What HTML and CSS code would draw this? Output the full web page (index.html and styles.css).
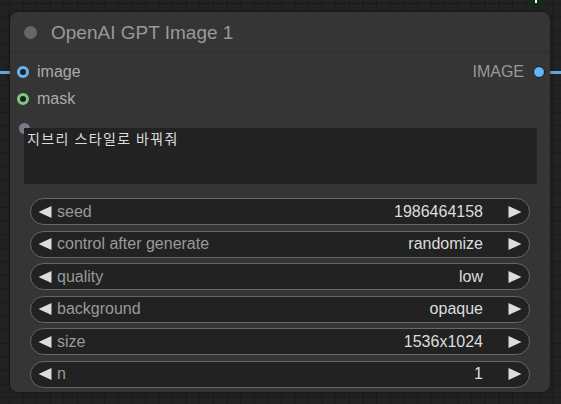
FILE: index.html
```html
<!DOCTYPE html>
<html>
<head>
<meta charset="utf-8">
<link rel="stylesheet" href="styles.css">
</head>
<body>
<div class="canvas">
  <div class="link link-in"></div>
  <div class="link link-out"></div>
  <div class="badge"><span class="badge-mark"></span></div>
  <div class="node">
    <div class="title">
      <span class="title-dot"></span>
      <span class="title-text">OpenAI GPT Image 1</span>
    </div>
    <div class="slots">
      <div class="slot-row">
        <div class="slot slot-in"><span class="dot ring blue"></span><span>image</span></div>
        <div class="slot slot-out"><span>IMAGE</span><span class="dot fill"></span></div>
      </div>
      <div class="slot-row">
        <div class="slot slot-in"><span class="dot ring green"></span><span>mask</span></div>
      </div>
    </div>
    <div class="prompt">
      <span class="prompt-dot"></span>
      <textarea class="prompt-input" spellcheck="false">지브리 스타일로 바꿔줘</textarea>
    </div>
    <div class="widgets">
      <div class="widget">
        <svg class="arrow" width="14" height="12" viewBox="0 0 14 12"><polygon points="0.5,6 13.5,0 13.5,12"/></svg>
        <span class="label">seed</span><span class="value">1986464158</span>
        <svg class="arrow" width="14" height="12" viewBox="0 0 14 12"><polygon points="0.5,0 13.5,6 0.5,12"/></svg>
      </div>
      <div class="widget">
        <svg class="arrow" width="14" height="12" viewBox="0 0 14 12"><polygon points="0.5,6 13.5,0 13.5,12"/></svg>
        <span class="label">control after generate</span><span class="value">randomize</span>
        <svg class="arrow" width="14" height="12" viewBox="0 0 14 12"><polygon points="0.5,0 13.5,6 0.5,12"/></svg>
      </div>
      <div class="widget">
        <svg class="arrow" width="14" height="12" viewBox="0 0 14 12"><polygon points="0.5,6 13.5,0 13.5,12"/></svg>
        <span class="label">quality</span><span class="value">low</span>
        <svg class="arrow" width="14" height="12" viewBox="0 0 14 12"><polygon points="0.5,0 13.5,6 0.5,12"/></svg>
      </div>
      <div class="widget">
        <svg class="arrow" width="14" height="12" viewBox="0 0 14 12"><polygon points="0.5,6 13.5,0 13.5,12"/></svg>
        <span class="label">background</span><span class="value">opaque</span>
        <svg class="arrow" width="14" height="12" viewBox="0 0 14 12"><polygon points="0.5,0 13.5,6 0.5,12"/></svg>
      </div>
      <div class="widget">
        <svg class="arrow" width="14" height="12" viewBox="0 0 14 12"><polygon points="0.5,6 13.5,0 13.5,12"/></svg>
        <span class="label">size</span><span class="value">1536x1024</span>
        <svg class="arrow" width="14" height="12" viewBox="0 0 14 12"><polygon points="0.5,0 13.5,6 0.5,12"/></svg>
      </div>
      <div class="widget">
        <svg class="arrow" width="14" height="12" viewBox="0 0 14 12"><polygon points="0.5,6 13.5,0 13.5,12"/></svg>
        <span class="label">n</span><span class="value">1</span>
        <svg class="arrow" width="14" height="12" viewBox="0 0 14 12"><polygon points="0.5,0 13.5,6 0.5,12"/></svg>
      </div>
    </div>
  </div>
</div>
</body>
</html>
```
FILE: styles.css
```css
* { box-sizing: border-box; }

html, body {
  margin: 0;
  width: 561px;
  height: 404px;
  overflow: hidden;
}

body {
  background-color: #222222;
  background-image:
    linear-gradient(to right, #1a1a1a 1px, transparent 1px),
    linear-gradient(to bottom, #1a1a1a 1px, transparent 1px);
  background-size: 13.6px 13.6px;
  background-position: 9px 3px;
  font-family: "Liberation Sans", Arial, sans-serif;
}

.canvas {
  position: relative;
  padding: 12px 0 0 10px;
}

.link {
  position: absolute;
  height: 3px;
  background: #5ea8e2;
}
.link-in { left: 0; top: 70.5px; width: 17px; }
.link-out { left: 545px; top: 70.5px; width: 16px; }

.badge {
  position: absolute;
  left: 524px;
  top: -17px;
  width: 24px;
  height: 24px;
  border-radius: 50%;
  background: #15291b;
}
.badge-mark {
  position: absolute;
  left: 11px;
  top: 17px;
  width: 2px;
  height: 3px;
  background: #ffffff;
}

.node {
  position: relative;
  width: 540px;
  height: 380px;
  background: #353535;
  border-radius: 8px;
  box-shadow: 0 0 4px rgba(0, 0, 0, 0.45);
  display: flex;
  flex-direction: column;
}

.title {
  height: 41px;
  border-bottom: 1px solid #2e2e2e;
  display: flex;
  align-items: center;
  padding-left: 14px;
}
.title-dot {
  width: 13px;
  height: 13px;
  border-radius: 50%;
  background: #666666;
  margin-right: 14px;
  margin-top: 1px;
}
.title-text {
  font-size: 19px;
  color: #999999;
  margin-top: 1px;
}

.slots {
  padding-top: 5px;
}
.slot-row {
  height: 27.2px;
  display: flex;
  align-items: center;
  justify-content: space-between;
}
.slot {
  display: flex;
  align-items: center;
  font-size: 16px;
  color: #aaaaaa;
}
.slot-in {
  padding-left: 7px;
  gap: 8px;
}
.slot-out {
  padding-right: 5px;
  gap: 9px;
  color: #999999;
}

.dot {
  width: 12px;
  height: 12px;
  border-radius: 50%;
  flex: none;
}
.ring {
  border: 3px solid;
  background: #202225;
}
.ring.blue { border-color: #64b5f6; }
.ring.green { border-color: #7fc77f; }
.fill {
  background: #64b5f6;
  border: 1.5px solid #151515;
}

.prompt {
  position: relative;
  margin-top: 15.6px;
}
.prompt-dot {
  position: absolute;
  left: 8.5px;
  top: -5px;
  width: 11px;
  height: 11px;
  border-radius: 50%;
  background: #7a7a88;
}
.prompt-input {
  position: relative;
  display: block;
  margin: 0 0 0 14px;
  width: 513px;
  height: 56px;
  background: #222222;
  color: #dddddd;
  border: 0;
  outline: none;
  resize: none;
  overflow: hidden;
  padding: 1px 3px;
  font-family: "Noto Sans CJK KR", "Liberation Sans", sans-serif;
  font-size: 14px;
  line-height: 18px;
  letter-spacing: 1.4px;
}

.widgets {
  margin-top: 14px;
  padding: 0 20px;
  display: flex;
  flex-direction: column;
  gap: 5.4px;
}
.widget {
  height: 27.2px;
  border: 1px solid #666666;
  border-radius: 14px;
  background: #222222;
  display: flex;
  align-items: center;
  padding: 0 7px;
  font-size: 16px;
}
.arrow {
  flex: none;
  fill: #dddddd;
}
.label {
  margin-left: 5px;
  color: #999999;
}
.value {
  margin-left: auto;
  margin-right: 25px;
  color: #dddddd;
}
```
